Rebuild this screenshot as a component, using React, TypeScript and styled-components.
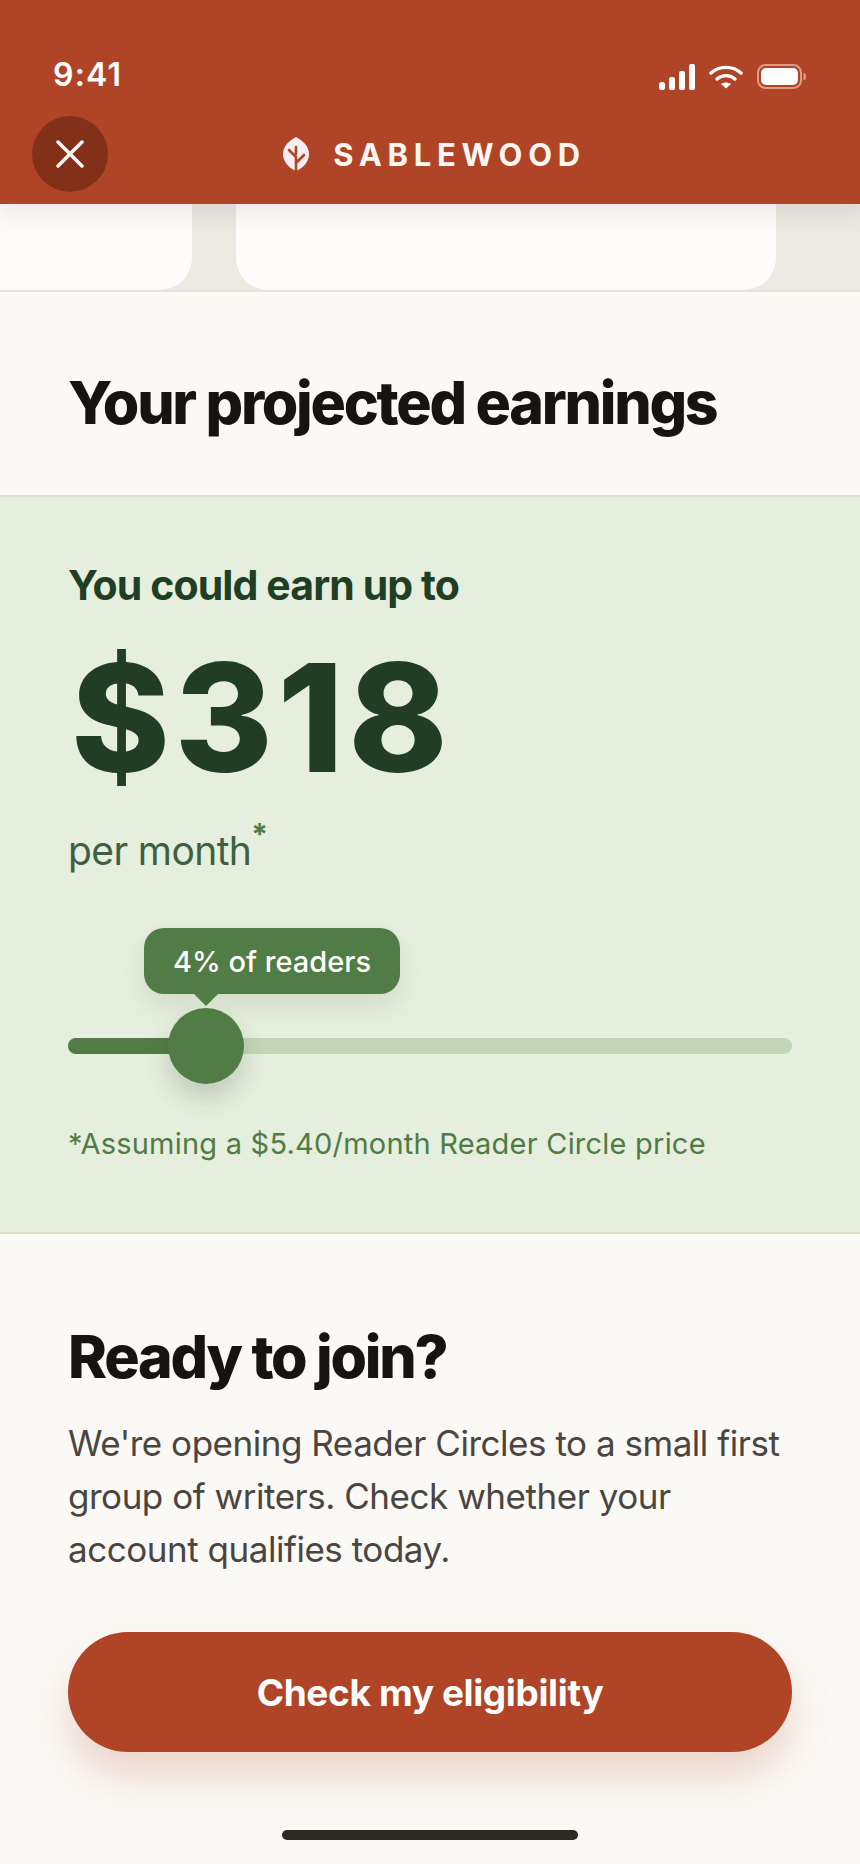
import React from "react";
import styled, { createGlobalStyle } from "styled-components";

const GlobalStyle = createGlobalStyle`
  html, body {
    margin: 0;
    padding: 0;
    background: #fbf9f5;
  }
  * { box-sizing: border-box; }
`;

const Page = styled.div`
  width: 860px;
  height: 1864px;
  overflow: hidden;
  display: flex;
  flex-direction: column;
  background: #fbf9f5;
  font-family: Inter, "Liberation Sans", sans-serif;
  color: #161412;
`;

const Header = styled.header`
  position: relative;
  z-index: 2;
  height: 204px;
  flex: none;
  background: #b04427;
  box-shadow: 0 8px 24px rgba(60, 30, 15, 0.1);
  padding: 54px 53px 12px 32px;
  display: flex;
  flex-direction: column;
`;

const StatusBar = styled.div`
  display: flex;
  justify-content: space-between;
  align-items: center;
  height: 40px;
  padding-left: 21px;
  margin-bottom: 22px;
`;

const Time = styled.span`
  color: #fff;
  font-size: 32px;
  font-weight: 600;
  letter-spacing: 1.2px;
`;

const StatusIcons = styled.div`
  display: flex;
  align-items: center;
  gap: 14px;
  padding-top: 5px;
`;

const NavRow = styled.div`
  position: relative;
  display: flex;
  align-items: center;
  justify-content: center;
  height: 76px;
  padding-left: 30px;
`;

const CloseButton = styled.button`
  position: absolute;
  left: 0;
  top: 0;
  width: 76px;
  height: 76px;
  border: 0;
  padding: 0;
  border-radius: 50%;
  background: #823018;
  display: flex;
  align-items: center;
  justify-content: center;
`;

const Brand = styled.div`
  display: flex;
  align-items: center;
  gap: 24px;
  color: #fdf6f2;
  font-size: 31px;
  font-weight: 700;
  letter-spacing: 5.7px;
`;

const CardStrip = styled.div`
  flex: none;
  height: 88px;
  display: flex;
  gap: 44px;
  background: #ebe9e2;
  border-bottom: 2px solid #e4e2db;
  margin-left: -40px;
`;

const PeekCard = styled.div<{ $width: number }>`
  width: ${(p) => p.$width}px;
  height: 86px;
  background: #fdfcfa;
  border-radius: 0 0 32px 32px;
`;

const TitleSection = styled.section`
  flex: none;
  height: 205px;
  padding: 77px 68px 0;
  border-bottom: 2px solid #dfe3d6;
`;

const Heading = styled.h2`
  margin: 0;
  font-size: 59px;
  line-height: 68px;
  font-weight: 800;
  letter-spacing: -2.25px;
  color: #161412;
`;

const EarnSection = styled.section`
  flex: none;
  height: 737px;
  padding: 65px 68px 0;
  background: #e6eedd;
  border-bottom: 2px solid #d5dfca;
`;

const EarnLabel = styled.div`
  font-size: 41px;
  line-height: 46px;
  font-weight: 700;
  letter-spacing: -0.9px;
  color: #1f3f25;
`;

const Amount = styled.div`
  margin-top: 25px;
  margin-left: 3px;
  font-size: 150px;
  line-height: 170px;
  font-weight: 800;
  letter-spacing: 4.5px;
  color: #213d25;
`;

const PerMonth = styled.div`
  margin-top: 25px;
  font-size: 39px;
  line-height: 46px;
  letter-spacing: -0.6px;
  color: #3e5f41;
`;

const Star = styled.sup`
  font-size: 30px;
  line-height: 0;
  font-weight: 700;
  margin-left: 0;
  color: #4f7c45;
  position: relative;
  top: -6px;
`;

const SliderArea = styled.div`
  position: relative;
  margin-top: 164px;
  height: 16px;
`;

const Track = styled.div`
  height: 16px;
  border-radius: 8px;
  background: #c2d7b6;
  overflow: hidden;
`;

const TrackFill = styled.div`
  height: 100%;
  background: #517c45;
`;

const Thumb = styled.div`
  position: absolute;
  top: -30px;
  width: 76px;
  height: 76px;
  border-radius: 50%;
  background: #517c45;
  box-shadow: 0 14px 24px rgba(40, 70, 40, 0.2);
`;

const Bubble = styled.div`
  position: absolute;
  left: 76px;
  top: -110px;
  width: 256px;
  height: 66px;
  border-radius: 20px;
  background: #517c45;
  color: #fff;
  font-size: 29px;
  font-weight: 500;
  display: flex;
  align-items: center;
  justify-content: center;
  box-shadow: 0 12px 24px rgba(40, 70, 40, 0.1);

  &::after {
    content: "";
    position: absolute;
    left: 50px;
    bottom: -12px;
    border-left: 12px solid transparent;
    border-right: 12px solid transparent;
    border-top: 12px solid #517c45;
  }
`;

const Footnote = styled.div`
  margin-top: 71px;
  font-size: 29px;
  line-height: 38px;
  letter-spacing: 0.22px;
  color: #4f7c45;
`;

const JoinSection = styled.section`
  flex: 1;
  padding: 89px 68px 0;
  display: flex;
  flex-direction: column;
`;

const Body = styled.p`
  margin: 26px 0 0;
  font-size: 35px;
  line-height: 53px;
  letter-spacing: -0.47px;
  color: #4a4540;
`;

const CtaButton = styled.button`
  margin-top: 56px;
  width: 724px;
  height: 120px;
  border: 0;
  border-radius: 60px;
  background: #b04427;
  color: #fff;
  font-family: inherit;
  font-size: 37px;
  font-weight: 700;
  letter-spacing: -0.38px;
  box-shadow: 0 24px 40px rgba(176, 68, 39, 0.2);
`;

const HomeBar = styled.div`
  margin: 78px auto 0;
  width: 296px;
  height: 10px;
  border-radius: 5px;
  background: #2d2925;
`;

const App: React.FC = () => {
  return (
    <Page>
      <GlobalStyle />
      <Header>
        <StatusBar>
          <Time>9:41</Time>
          <StatusIcons>
            <svg width="36" height="26" viewBox="0 0 36 26" fill="#fff">
              <rect x="0" y="18" width="6" height="8" rx="2.5" />
              <rect x="10" y="13" width="6" height="13" rx="2" />
              <rect x="20" y="7" width="6" height="19" rx="2" />
              <rect x="30" y="0" width="6" height="26" rx="2" />
            </svg>
            <svg width="34" height="24" viewBox="0 0 34 24" fill="none" stroke="#fff" strokeWidth="3.4" strokeLinecap="round">
              <path d="M2 8 C10 0.5 24 0.5 32 8" />
              <path d="M8 14 C13 9.5 21 9.5 26 14" />
              <path d="M12 19 L17 23.5 L22 19 C19 17 15 17 12 19 Z" fill="#fff" stroke="none" />
            </svg>
            <svg width="50" height="26" viewBox="0 0 50 26" fill="none">
              <rect x="1" y="1" width="43" height="23" rx="7.5" stroke="#e09a82" strokeWidth="2" />
              <rect x="4" y="4" width="37" height="17" rx="5" fill="#fff" />
              <path d="M47 9 C49 10 49 15 47 16 Z" fill="#e09a82" stroke="#e09a82" strokeWidth="1" />
            </svg>
          </StatusIcons>
        </StatusBar>
        <NavRow>
          <CloseButton aria-label="Close">
            <svg width="28" height="28" viewBox="0 0 28 28" stroke="#fff" strokeWidth="3.4" strokeLinecap="round">
              <path d="M2 2 L26 26 M26 2 L2 26" />
            </svg>
          </CloseButton>
          <Brand>
            <svg width="26" height="34" viewBox="0 0 26 34">
              <path d="M13 0 C20 4 26 9 26 17 C26 25 20 31 13 34 C6 31 0 25 0 17 C0 9 6 4 13 0 Z" fill="#fbeef0" />
              <path d="M13 34 V21 M13 17 V10 M13 20 L6 13 M13 26 L21 18" stroke="#b04427" strokeWidth="2.6" strokeLinecap="round" fill="none" />
            </svg>
            SABLEWOOD
          </Brand>
        </NavRow>
      </Header>

      <CardStrip>
        <PeekCard $width={232} />
        <PeekCard $width={540} />
      </CardStrip>

      <TitleSection>
        <Heading>Your projected earnings</Heading>
      </TitleSection>

      <EarnSection>
        <EarnLabel>You could earn up to</EarnLabel>
        <Amount>$318</Amount>
        <PerMonth>
          per month<Star>*</Star>
        </PerMonth>
        <SliderArea>
          <Track>
            <TrackFill style={{ width: `${(138 / 724) * 100}%` }} />
          </Track>
          <Bubble>4% of readers</Bubble>
          <Thumb style={{ left: 100 }} />
        </SliderArea>
        <Footnote>*Assuming a $5.40/month Reader Circle price</Footnote>
      </EarnSection>

      <JoinSection>
        <Heading>Ready to join?</Heading>
        <Body>
          We're opening Reader Circles to a small first
          <br />
          group of writers. Check whether your
          <br />
          account qualifies today.
        </Body>
        <CtaButton>Check my eligibility</CtaButton>
        <HomeBar />
      </JoinSection>
    </Page>
  );
};

export default App;
